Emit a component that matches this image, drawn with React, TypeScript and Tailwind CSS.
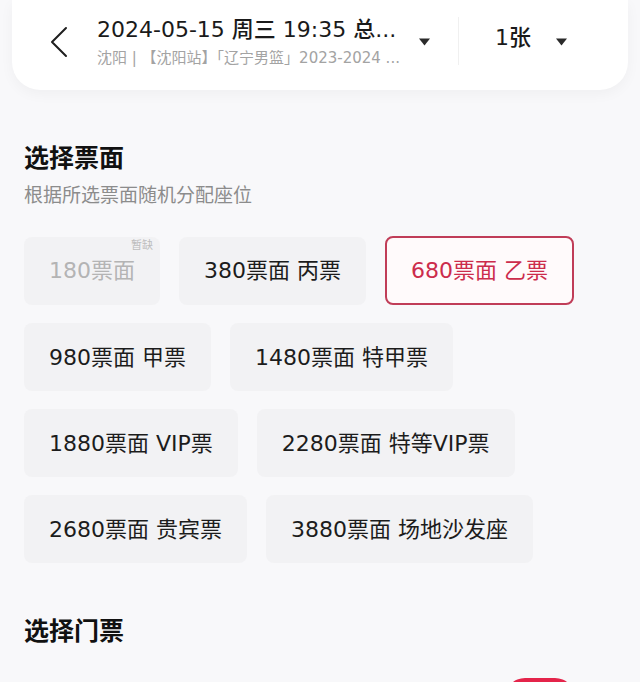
import { memo } from 'react';

// Ticket tiers shown as rows of selectable chips
type Tier = { label: string; soldOut?: boolean; selected?: boolean };

const tierRows: Tier[][] = [
  [{ label: '180票面', soldOut: true }, { label: '380票面 丙票' }, { label: '680票面 乙票', selected: true }],
  [{ label: '980票面 甲票' }, { label: '1480票面 特甲票' }],
  [{ label: '1880票面 VIP票' }, { label: '2280票面 特等VIP票' }],
  [{ label: '2680票面 贵宾票' }, { label: '3880票面 场地沙发座' }],
];

function CaretDown({ className = '' }: { className?: string }) {
  return (
    <svg viewBox="0 0 12 8" className={className} width="13" height="8">
      <path d="M0.5 0.5h11L6 7.5z" fill="#2b2b2b" />
    </svg>
  );
}

function Header() {
  return (
    <div className="mx-[12px] flex h-[90px] items-start rounded-b-[28px] bg-white pl-[36px] shadow-[0_4px_14px_rgba(0,0,0,0.04)]">
      <svg viewBox="0 0 22 32" width="22" height="32" className="mt-[26px] shrink-0">
        <path d="M18 2L4 16l14 14" fill="none" stroke="#1f1f1f" strokeWidth="2" strokeLinecap="round" strokeLinejoin="round" />
      </svg>
      <div className="ml-[27px] w-[315px] shrink-0 pt-[15px]">
        <div className="whitespace-nowrap text-[22px] font-medium leading-[30px] text-[#1a1a1a]">2024-05-15 周三 19:35 总...</div>
        <div className="mt-[3px] whitespace-nowrap text-[15px] leading-[20px] text-[#a3a3a3]">
          沈阳 | 【沈阳站】「辽宁男篮」2023-2024 ...
        </div>
      </div>
      <CaretDown className="ml-[6px] mt-[38px] shrink-0" />
      <div className="ml-[27px] mt-[17px] h-[48px] w-px shrink-0 bg-[#f0f0f0]" />
      <div className="ml-[36px] mt-[23px] whitespace-nowrap text-[22px] font-medium leading-[30px] text-[#1a1a1a]">1张</div>
      <CaretDown className="ml-[24px] mt-[38px] shrink-0" />
    </div>
  );
}

function TierChip({ tier }: { tier: Tier }) {
  if (tier.selected) {
    return (
      <div className="flex h-[69px] items-center rounded-[8px] border-2 border-[#c03d58] bg-[#fffafb] px-[24px] text-[22px] text-[#cc2c4c]">
        {tier.label}
      </div>
    );
  }
  return (
    <div
      className={`relative flex h-[68px] items-center rounded-[8px] bg-[#f2f2f4] px-[25px] text-[22px] ${
        tier.soldOut ? 'text-[#b4b4b4]' : 'text-[#1c1c1c]'
      }`}>
      {tier.label}
      {tier.soldOut && <span className="absolute right-[7px] top-[2px] text-[11px] leading-[14px] text-[#bdbdbd]">暂缺</span>}
    </div>
  );
}

export default memo(function App() {
  return (
    <div className="h-[682px] w-[640px] overflow-hidden bg-[#f8f8fa] font-['DejaVu_Sans','Noto_Sans_CJK_SC',sans-serif]">
      <Header />

      <section className="px-[24px] pt-[56px]">
        <h2 className="text-[25px] font-bold leading-[25px] text-[#111]">选择票面</h2>
        <p className="mt-[15px] text-[19px] leading-[19px] text-[#8c8c8c]">根据所选票面随机分配座位</p>

        <div className="mt-[31px] flex flex-col gap-[18px]">
          {tierRows.map((row, i) => (
            <div key={i} className="flex items-center gap-[19px]">
              {row.map(tier => (
                <TierChip key={tier.label} tier={tier} />
              ))}
            </div>
          ))}
        </div>

        <h2 className="mt-[56px] text-[25px] font-bold leading-[25px] text-[#111]">选择门票</h2>
        <div className="mt-[34px] flex justify-end pr-[41px]">
          <div className="h-[40px] w-[70px] rounded-full bg-[#e4244a]" />
        </div>
      </section>
    </div>
  );
});
